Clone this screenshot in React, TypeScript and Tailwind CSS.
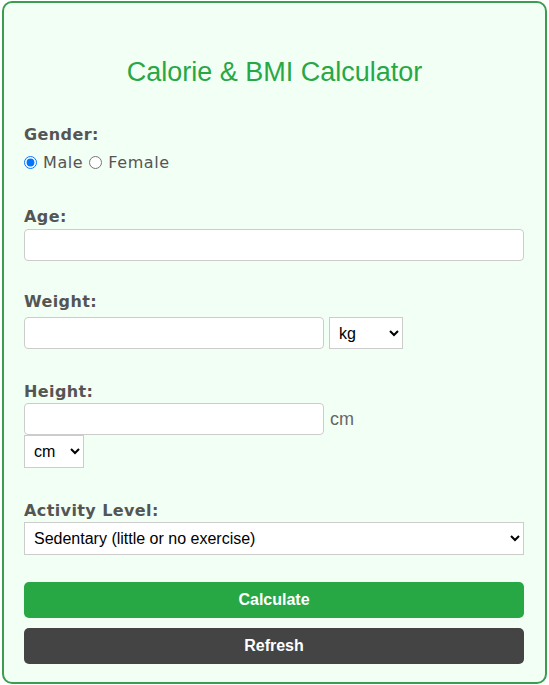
import { useState } from 'react';

const labelCls = "block h-[19px] leading-[19px] text-[16px] font-bold tracking-[0.4px] text-[#555] font-['DejaVu_Sans',Verdana,sans-serif]";
const inputCls = "block h-[32px] rounded-[4px] border border-[#ccc] bg-white px-[10px] text-[16px] text-[#333] outline-none font-['Liberation_Sans',Arial,sans-serif]";
const selectCls = "block border border-[#ccc] bg-white pl-[5px] pr-[4px] text-[16px] text-black font-['Liberation_Sans',Arial,sans-serif]";

export default function App() {
  const [gender, setGender] = useState('male');

  return (
    <div className="min-h-[685px] bg-white pt-[1px]">
      <div className="ml-[2px] w-[545px] rounded-[10px] border-2 border-[#3a9d4f] bg-[#f2fff5] px-[20px] pb-[18px] pt-[54px]">
        {/* Title */}
        <h2 className="h-[31px] text-center text-[27px] leading-[31px] text-[#28a745] font-['Liberation_Sans',Arial,sans-serif]">
          Calorie &amp; BMI Calculator
        </h2>

        {/* Gender */}
        <label className={`${labelCls} mt-[37px]`}>Gender:</label>
        <div className="mt-[9px] flex h-[19px] items-center text-[16px] leading-[19px] tracking-[0.6px] text-[#555] font-['DejaVu_Sans',Verdana,sans-serif]">
          <input
            type="radio"
            name="gender"
            checked={gender === 'male'}
            onChange={() => setGender('male')}
            className="m-0 h-[13px] w-[13px] accent-[#0075ff]"
          />
          <span className="ml-[6px]">Male</span>
          <input
            type="radio"
            name="gender"
            checked={gender === 'female'}
            onChange={() => setGender('female')}
            className="m-0 ml-[6px] h-[13px] w-[13px]"
          />
          <span className="ml-[6px]">Female</span>
        </div>

        {/* Age */}
        <label className={`${labelCls} mt-[35px]`}>Age:</label>
        <input type="number" className={`${inputCls} mt-[3px] w-[500px]`} />

        {/* Weight */}
        <label className={`${labelCls} mt-[31px]`}>Weight:</label>
        <div className="mt-[6px] flex items-center gap-[5px]">
          <input type="number" className={`${inputCls} w-[300px]`} />
          <select className={`${selectCls} h-[32px] w-[74px]`} defaultValue="kg">
            <option value="kg">kg</option>
            <option value="lb">lb</option>
          </select>
        </div>

        {/* Height */}
        <label className={`${labelCls} mt-[33px]`}>Height:</label>
        <div className="mt-[2px] flex items-center gap-[6px]">
          <input type="number" className={`${inputCls} w-[300px]`} />
          <span className="text-[18px] text-[#666] font-['Liberation_Sans',Arial,sans-serif]">cm</span>
        </div>
        <select className={`${selectCls} h-[33px] w-[60px]`} defaultValue="cm">
          <option value="cm">cm</option>
          <option value="ft">ft</option>
        </select>

        {/* Activity */}
        <label className={`${labelCls} mt-[33px]`}>Activity Level:</label>
        <select className={`${selectCls} mt-[2px] h-[33px] w-[500px]`} defaultValue="sedentary">
          <option value="sedentary">Sedentary (little or no exercise)</option>
          <option value="light">Lightly active (1-3 days/week)</option>
          <option value="moderate">Moderately active (3-5 days/week)</option>
          <option value="very">Very active (6-7 days/week)</option>
        </select>

        {/* Buttons */}
        <button className="mt-[27px] block h-[36px] w-[500px] rounded-[5px] bg-[#28a745] text-[16px] font-bold text-white font-['Liberation_Sans',Arial,sans-serif]">
          Calculate
        </button>
        <button className="mt-[10px] block h-[36px] w-[500px] rounded-[5px] bg-[#444] text-[16px] font-bold text-white font-['Liberation_Sans',Arial,sans-serif]">
          Refresh
        </button>
      </div>
    </div>
  );
}
